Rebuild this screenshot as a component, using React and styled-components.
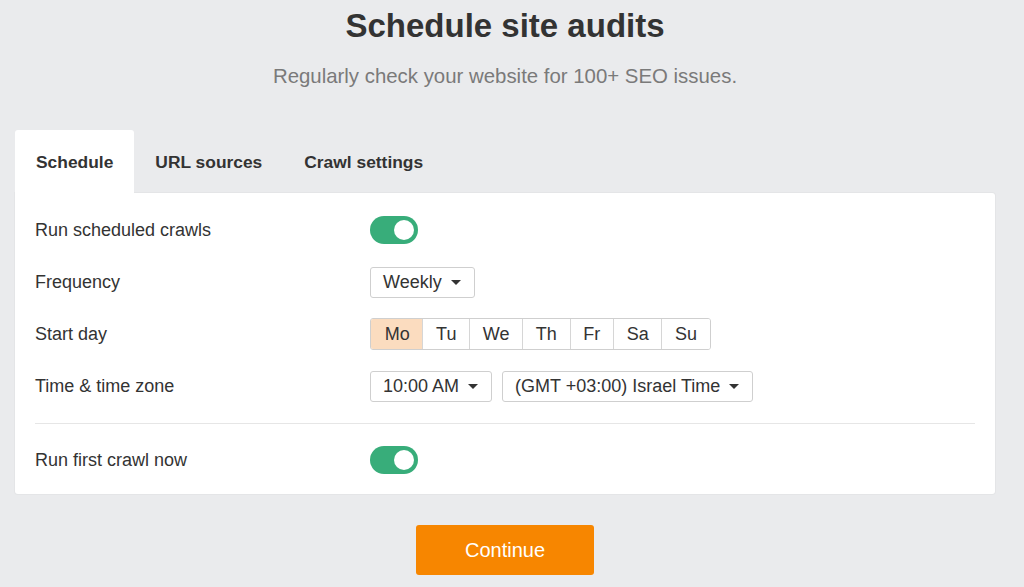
import React, { useState } from "react";
import styled, { createGlobalStyle } from "styled-components";

const GlobalStyle = createGlobalStyle`
  html, body {
    margin: 0;
    padding: 0;
    background: #eaebed;
    font-family: "Liberation Sans", Arial, sans-serif;
    color: #333;
  }
`;

const Page = styled.div`
  width: 980px;
  margin-left: 15px;
  padding-top: 7px;
`;

const Header = styled.header`
  text-align: center;
`;

const Title = styled.h1`
  margin: 0;
  font-size: 33px;
  line-height: 38px;
  font-weight: bold;
  color: #333;
`;

const Subtitle = styled.p`
  margin: 19px 0 0;
  font-size: 20.4px;
  line-height: 24px;
  color: #7a7a7a;
`;

const Tabs = styled.nav`
  display: flex;
  margin-top: 42px;
`;

const Tab = styled.button`
  height: 63px;
  padding: 2px 21px 0;
  border: none;
  border-radius: 3px 3px 0 0;
  background: ${(p) => (p.active ? "#fff" : "transparent")};
  font-family: inherit;
  font-size: 17.4px;
  font-weight: bold;
  color: #333;
  cursor: pointer;
`;

const Panel = styled.section`
  background: #fff;
  border-radius: 0 3px 3px 3px;
  box-shadow: 0 0 0 1px #e4e5e7;
  padding: 21px 20px 18px;
  display: flex;
  flex-direction: column;
  gap: 20px;
`;

const Row = styled.div`
  display: flex;
  align-items: center;
  min-height: 32px;
`;

const Label = styled.div`
  width: 335px;
  font-size: 18px;
  color: #333;
`;

const Controls = styled.div`
  display: flex;
  align-items: center;
  gap: 10px;
`;

const Divider = styled.hr`
  margin: 1px 0 0;
  border: none;
  border-top: 1px solid #e6e6e6;
`;

const Track = styled.button`
  position: relative;
  width: 48px;
  height: 28px;
  padding: 0;
  border: none;
  border-radius: 14px;
  background: ${(p) => (p.on ? "#38ad7a" : "#ccc")};
  cursor: pointer;
`;

const Knob = styled.span`
  position: absolute;
  top: 4px;
  left: ${(p) => (p.on ? "24px" : "4px")};
  width: 20px;
  height: 20px;
  border-radius: 50%;
  background: #fff;
`;

const Select = styled.button`
  display: inline-flex;
  align-items: center;
  gap: 9px;
  height: 31px;
  padding: 0 13px 0 12px;
  border: 1px solid #cfcfcf;
  border-radius: 3px;
  background: #fff;
  font-family: inherit;
  font-size: 18px;
  color: #333;
  cursor: pointer;
`;

const Caret = styled.span`
  width: 0;
  height: 0;
  border-left: 5px solid transparent;
  border-right: 5px solid transparent;
  border-top: 5px solid #333;
`;

const DayGroup = styled.div`
  display: flex;
  border: 1px solid #cfcfcf;
  border-radius: 3px;
  overflow: hidden;
`;

const Day = styled.button`
  height: 30px;
  padding: 0 12.7px;
  border: none;
  border-left: 1px solid ${(p) => (p.first ? "transparent" : "#d6d6d6")};
  background: ${(p) => (p.active ? "#fbdcbf" : "#fff")};
  font-family: inherit;
  font-size: 18px;
  color: #333;
  cursor: pointer;
`;

const Footer = styled.div`
  display: flex;
  justify-content: center;
  margin-top: 31px;
`;

const ContinueButton = styled.button`
  width: 178px;
  height: 50px;
  border: none;
  border-radius: 3px;
  background: #f78600;
  color: #fff;
  font-family: inherit;
  font-size: 20px;
  cursor: pointer;
`;

function Toggle({ on, onChange }) {
  return (
    <Track on={on ? 1 : 0} onClick={() => onChange(!on)}>
      <Knob on={on ? 1 : 0} />
    </Track>
  );
}

function Dropdown({ children }) {
  return (
    <Select>
      {children}
      <Caret />
    </Select>
  );
}

const days = ["Mo", "Tu", "We", "Th", "Fr", "Sa", "Su"];

export default function App() {
  const [scheduled, setScheduled] = useState(true);
  const [firstNow, setFirstNow] = useState(true);
  const [day, setDay] = useState("Mo");

  return (
    <>
      <GlobalStyle />
      <Page>
        <Header>
          <Title>Schedule site audits</Title>
          <Subtitle>Regularly check your website for 100+ SEO issues.</Subtitle>
        </Header>

        <Tabs>
          <Tab active>Schedule</Tab>
          <Tab>URL sources</Tab>
          <Tab>Crawl settings</Tab>
        </Tabs>

        <Panel>
          <Row>
            <Label>Run scheduled crawls</Label>
            <Toggle on={scheduled} onChange={setScheduled} />
          </Row>
          <Row>
            <Label>Frequency</Label>
            <Dropdown>Weekly</Dropdown>
          </Row>
          <Row>
            <Label>Start day</Label>
            <DayGroup>
              {days.map((d, i) => (
                <Day key={d} first={i === 0} active={d === day} onClick={() => setDay(d)}>
                  {d}
                </Day>
              ))}
            </DayGroup>
          </Row>
          <Row>
            <Label>Time &amp; time zone</Label>
            <Controls>
              <Dropdown>10:00 AM</Dropdown>
              <Dropdown>(GMT +03:00) Israel Time</Dropdown>
            </Controls>
          </Row>
          <Divider />
          <Row>
            <Label>Run first crawl now</Label>
            <Toggle on={firstNow} onChange={setFirstNow} />
          </Row>
        </Panel>

        <Footer>
          <ContinueButton>Continue</ContinueButton>
        </Footer>
      </Page>
    </>
  );
}
